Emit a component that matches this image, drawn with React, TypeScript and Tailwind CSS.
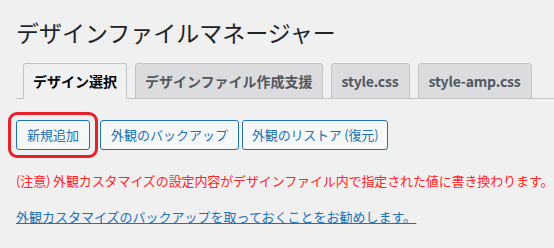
import React from 'react';

const font = { fontFamily: '"Noto Sans CJK JP", "Noto Sans", sans-serif' };

const tabs = ['デザイン選択', 'デザインファイル作成支援', 'style.css', 'style-amp.css'];

export default function App() {
  return (
    <div className="min-h-[248px] w-[554px] overflow-hidden bg-[#f0f0f1] pl-4 text-[#1d2327]" style={font}>
      <h1 className="pt-[17px] text-[23px] leading-[30px] font-normal whitespace-nowrap">デザインファイルマネージャー</h1>

      {/* tabs */}
      <div className="mt-4 flex border-b border-[#c3c4c7] pl-[7px]">
        {tabs.map((t, i) => (
          <div
            key={t}
            className={
              'mr-[8px] -mb-px rounded-t-[3px] border border-[#c3c4c7] px-[9px] py-[5px] text-[14px] leading-6 font-semibold whitespace-nowrap ' +
              (i > 1 ? 'px-[10px] tracking-[-0.2px] ' : '') +
              (i === 0 ? 'border-b-[#f0f0f1] bg-[#f0f0f1] text-black' : 'border-b-[#c3c4c7] bg-[#dcdcde] text-[#50575e]')
            }
          >
            {t}
          </div>
        ))}
      </div>

      {/* buttons */}
      <div className="mt-[21px] flex items-center">
        <div className="relative mr-[10px]">
          <button className="h-[30px] rounded-[3px] border border-[#2271b1] bg-[#f6f7f7] px-[10px] text-[13px] text-[#2271b1]">
            新規追加
          </button>
          <span className="pointer-events-none absolute -inset-[8px] rounded-[9px] border-[3px] border-[#e8202a]" />
        </div>
        <button className="mr-[3px] h-[30px] rounded-[3px] border border-[#2271b1] bg-[#f6f7f7] px-[10px] text-[13px] whitespace-nowrap text-[#2271b1]">
          外観のバックアップ
        </button>
        <button className="h-[30px] rounded-[3px] border border-[#2271b1] bg-[#f6f7f7] px-[9px] text-[13px] tracking-[-0.2px] whitespace-nowrap text-[#2271b1]">
          外観のリストア (復元)
        </button>
      </div>

      <p className="mt-[21px] text-[13px] leading-5 tracking-[-0.12px] whitespace-nowrap text-[#ff2626]">
        (注意) 外観カスタマイズの設定内容がデザインファイル内で指定された値に書き換わります。
      </p>
      <p className="mt-[16px] text-[13px] leading-5 whitespace-nowrap">
        <a href="#" className="text-[#2271b1] underline">
          外観カスタマイズのバックアップを取っておくことをお勧めします。
        </a>
      </p>
    </div>
  );
}
